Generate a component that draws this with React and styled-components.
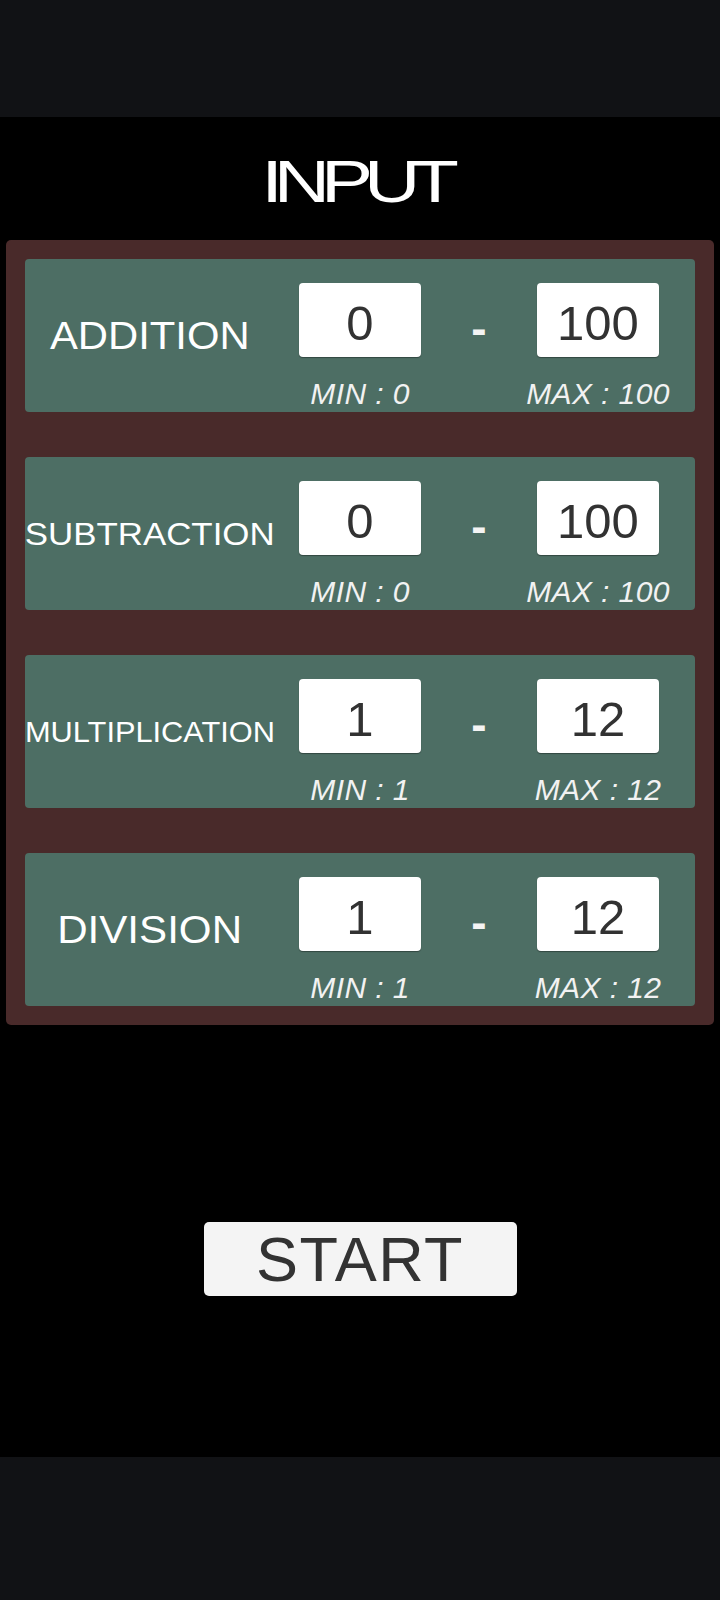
import React from "react";
import styled, { createGlobalStyle } from "styled-components";

const Global = createGlobalStyle`
  html, body { margin: 0; padding: 0; background: #000; }
  body { font-family: "Liberation Sans", Arial, sans-serif; }
  * { box-sizing: border-box; }
`;

const Page = styled.div`
  width: 720px;
  min-height: 1600px;
  display: flex;
  flex-direction: column;
  background: #000;
`;

const SystemBar = styled.div`
  height: ${(p) => p.$h}px;
  background: #111215;
  flex: none;
`;

const Main = styled.main`
  flex: 1;
  display: flex;
  flex-direction: column;
  align-items: stretch;
  padding-top: 35px;
`;

const Title = styled.h1`
  margin: 0 0 29px;
  display: flex;
  justify-content: center;
  font-family: "Liberation Sans", Arial, sans-serif;
  font-weight: 400;
  font-size: 60px;
  line-height: 59px;
  color: #fff;
`;

const TitleText = styled.span`
  display: inline-block;
  letter-spacing: -7px;
  padding-right: 7px;
  transform: scaleX(1.3);
  transform-origin: center;
`;

const Panel = styled.section`
  margin: 0 6px;
  padding: 19px;
  background: #492a2a;
  border-radius: 5px;
  display: flex;
  flex-direction: column;
  gap: 45px;
`;

const Card = styled.div`
  height: 153px;
  background: #4d6e64;
  border-radius: 4px;
  display: flex;
`;

const Label = styled.div`
  width: 250px;
  flex: none;
  display: flex;
  align-items: center;
  justify-content: center;
  color: #fff;
  font-size: ${(p) => p.$size}px;
  white-space: nowrap;
  padding-top: 1px;
`;

const LabelText = styled.span`
  display: inline-block;
  transform: scaleX(${(p) => p.$stretch});
`;

const Fields = styled.div`
  margin-left: 24px;
  padding-top: 24px;
  display: grid;
  grid-template-columns: 122px 116px 122px;
  grid-template-rows: 74px auto;
  align-content: start;
`;

const NumberBox = styled.input`
  width: 122px;
  height: 74px;
  border: none;
  border-radius: 4px;
  background: #fff;
  box-shadow: 0 1px 1px rgba(0, 0, 0, 0.35);
  padding: 6px 0 0;
  margin: 0;
  text-align: center;
  font-family: "Liberation Sans", Arial, sans-serif;
  font-size: 49px;
  color: #323232;
  outline: none;
`;

const Dash = styled.div`
  display: flex;
  align-items: center;
  justify-content: center;
  color: #f4f4f4;
  font-size: 46px;
  font-weight: 700;
  padding-top: 16px;
`;

const Limit = styled.div`
  margin-top: 22px;
  display: flex;
  justify-content: center;
  font-style: italic;
  font-size: 30px;
  line-height: 30px;
  letter-spacing: 0.4px;
  color: #f2f2f2;
  white-space: nowrap;
`;

const LimitSpacer = styled.div``;

const StartButton = styled.button`
  align-self: center;
  margin-top: 197px;
  width: 313px;
  height: 74px;
  border: none;
  border-radius: 5px;
  background: #f4f4f4;
  color: #333;
  font-family: "Liberation Sans", Arial, sans-serif;
  font-size: 63px;
  letter-spacing: 1.5px;
  line-height: 74px;
  padding: 0;
  cursor: pointer;
`;

const ops = [
  { name: "ADDITION", size: 38, stretch: 1.1, min: 0, max: 100 },
  { name: "SUBTRACTION", size: 32, stretch: 1.09, min: 0, max: 100 },
  { name: "MULTIPLICATION", size: 30, stretch: 1.025, min: 1, max: 12 },
  { name: "DIVISION", size: 39, stretch: 1.08, min: 1, max: 12 },
];

export default function App() {
  return (
    <>
      <Global />
      <Page>
        <SystemBar $h={117} />
        <Main>
          <Title>
            <TitleText>INPUT</TitleText>
          </Title>
          <Panel>
            {ops.map((op) => (
              <Card key={op.name}>
                <Label $size={op.size}>
                  <LabelText $stretch={op.stretch}>{op.name}</LabelText>
                </Label>
                <Fields>
                  <NumberBox defaultValue={op.min} />
                  <Dash>-</Dash>
                  <NumberBox defaultValue={op.max} />
                  <Limit>MIN : {op.min}</Limit>
                  <LimitSpacer />
                  <Limit>MAX : {op.max}</Limit>
                </Fields>
              </Card>
            ))}
          </Panel>
          <StartButton>START</StartButton>
        </Main>
        <SystemBar $h={143} />
      </Page>
    </>
  );
}
